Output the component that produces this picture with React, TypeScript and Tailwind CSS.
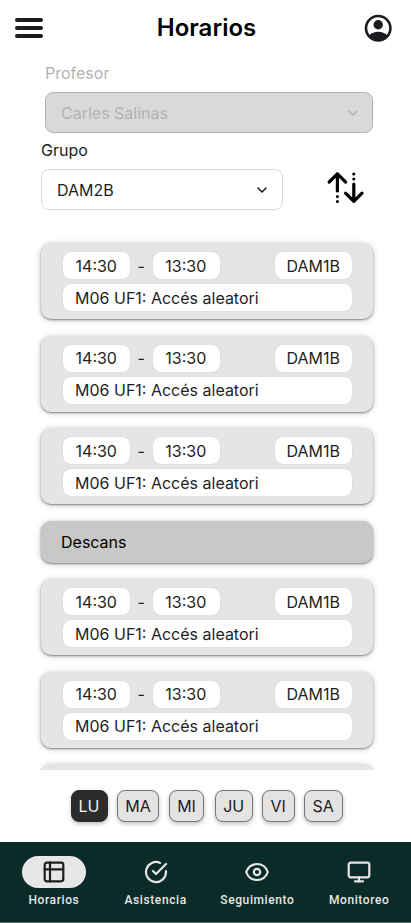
import type { ReactNode } from 'react';

const INTER = "font-['Inter',sans-serif]";
const CARD = 'shrink-0 rounded-[10px] shadow-[0_1px_2px_rgba(0,0,0,0.4),0_1px_6px_rgba(0,0,0,0.22)]';

function Chip({ children, className }: { children: ReactNode; className: string }) {
  return (
    <div className={`flex h-[27px] items-center rounded-lg bg-white text-base leading-none text-[#1e1e1e] shadow-[0_0_1px_rgba(0,0,0,0.2)] ${className}`}>
      {children}
    </div>
  );
}

function Lesson() {
  return (
    <div className={`h-[76px] bg-[#e5e5e5] pt-[9.1px] pr-[21px] pl-[22px] ${CARD}`}>
      <div className="flex items-center">
        <Chip className="w-[66.5px] justify-center">14:30</Chip>
        <span className="w-[23.5px] text-center text-base leading-none text-[#1e1e1e]">-</span>
        <Chip className="w-[67px] justify-center pr-[1.5px]">13:30</Chip>
        <Chip className="ml-auto w-[77.5px] justify-center">DAM1B</Chip>
      </div>
      <Chip className="mt-[5px] pl-3">M06 UF1: Accés aleatori</Chip>
    </div>
  );
}

function Chevron() {
  return (
    <svg width="16" height="16" viewBox="0 0 16 16" fill="none" stroke="currentColor" strokeWidth="1.6" strokeLinecap="round" strokeLinejoin="round">
      <path d="m4 6 4 4 4-4" />
    </svg>
  );
}

const days = [
  { name: 'LU', style: 'w-[37px] bg-[#2c2c2c] border-[#2c2c2c] text-[#f3f3f3]' },
  { name: 'MA', style: 'ml-[9.5px] w-[42px] bg-[#e3e3e3] border-[#767676] text-[#1e1e1e]' },
  { name: 'MI', style: 'ml-[10px] w-[35px] bg-[#e3e3e3] border-[#767676] text-[#1e1e1e]' },
  { name: 'JU', style: 'ml-[11px] w-[37.5px] bg-[#e3e3e3] border-[#767676] text-[#1e1e1e]' },
  { name: 'VI', style: 'ml-[9.5px] w-[32.5px] bg-[#e3e3e3] border-[#767676] text-[#1e1e1e]' },
  { name: 'SA', style: 'ml-[9.5px] w-[38.5px] bg-[#e3e3e3] border-[#767676] text-[#1e1e1e]' },
];

function NavItem({ label, active, children }: { label: string; active?: boolean; children: ReactNode }) {
  return (
    <div className="flex flex-1 flex-col items-center">
      <div className={`flex h-8 w-16 items-center justify-center rounded-full ${active ? 'bg-[#e6e6e6] text-[#1e1e1e]' : 'text-[#e6e6e6]'}`}>
        <svg width="24" height="24" viewBox="0 0 24 24" fill="none" stroke="currentColor" strokeWidth="2.2" strokeLinecap="round" strokeLinejoin="round">
          {children}
        </svg>
      </div>
      <span className="mt-1 font-['Roboto',sans-serif] text-xs leading-4 font-medium tracking-[0.6px] text-[#e6e6e6]">{label}</span>
    </div>
  );
}

export default function App() {
  return (
    <div className={`flex h-[923px] w-[411px] flex-col overflow-hidden bg-white ${INTER}`}>
      <header className="flex h-[55px] shrink-0 items-center pr-[17px] pl-[15px]">
        <div className="flex w-[28px] flex-col gap-1">
          <span className="h-1 rounded-full bg-[#1d1b20]" />
          <span className="h-1 rounded-full bg-[#1d1b20]" />
          <span className="h-1 rounded-full bg-[#1d1b20]" />
        </div>
        <h1 className="flex-1 pl-2 text-center text-2xl leading-none font-semibold text-black">Horarios</h1>
        <svg width="32" height="32" viewBox="0 0 32 32">
          <circle cx="16.2" cy="16.2" r="12.2" fill="none" stroke="#1d1b20" strokeWidth="2.6" />
          <circle cx="16.2" cy="12.8" r="4.7" fill="#1d1b20" />
          <path d="M6.8 23.6c5.2-5 13.6-5 18.8 0A12.2 12.2 0 0 1 6.8 23.6Z" fill="#1d1b20" />
        </svg>
      </header>

      <section className="shrink-0 pr-[38px] pl-[45px] text-[#b3b3b3]">
        <div className="mt-[7px] text-base leading-[22px]">Profesor</div>
        <div className="mt-2 flex h-[41px] items-center justify-between rounded-lg border border-[#b3b3b3] bg-[#d9d9d9] pr-[11px] pl-[15px] text-base leading-none">
          <span>Carles Salinas</span>
          <Chevron />
        </div>
      </section>

      <section className="shrink-0 pl-[41px] text-[#1e1e1e]">
        <div className="mt-[6px] text-base leading-[22px]">Grupo</div>
        <div className="mt-2 flex items-center">
          <div className="flex h-[41px] w-[242px] items-center justify-between rounded-lg border border-[#d9d9d9] pr-3 pl-[15px] text-base leading-none">
            <span>DAM2B</span>
            <Chevron />
          </div>
          <svg className="-mt-1 ml-[43px]" width="40" height="36" viewBox="0 0 40 36" fill="none" stroke="#000" strokeWidth="3.2" strokeLinecap="round" strokeLinejoin="round">
            <path d="M11.4 21V4M3.2 12l8.2-8.2 8.2 8.2M27.8 14v17M19.6 23.2l8.2 8.2 8.2-8.2" />
            <path d="M11.4 26.5v.01M11.4 31.5v.01M27.8 4v.01M27.8 9v.01" strokeWidth="3.2" />
          </svg>
        </div>
      </section>

      <main className="mt-[13px] flex h-[547px] shrink-0 flex-col gap-[16.5px] overflow-hidden pt-5 pr-[38px] pl-[41px]">
        <Lesson />
        <Lesson />
        <Lesson />
        <div className={`flex h-[42px] items-center bg-[#c8c8c8] pl-5 text-base leading-none text-black ${CARD}`}>Descans</div>
        <Lesson />
        <Lesson />
        <div className={`h-[76px] bg-[#e5e5e5] ${CARD}`} />
      </main>

      <div className="mt-5 flex shrink-0 pl-[70.5px]">
        {days.map((day) => (
          <div key={day.name} className={`flex h-8 shrink-0 items-center justify-center rounded-lg border text-base leading-none shadow-[0_2px_4px_rgba(0,0,0,0.25)] ${day.style}`}>
            {day.name}
          </div>
        ))}
      </div>

      <nav className="mt-auto flex h-[81px] shrink-0 gap-2 border-b border-[#5b7472] bg-[#0b2b29] pt-[14px] pr-[5px] pl-[7px]">
        <NavItem label="Horarios" active>
          <rect x="2.7" y="2.7" width="18.6" height="18.6" rx="2.2" />
          <path d="M2.7 9.3h18.6M8 2.7v18.6" />
        </NavItem>
        <NavItem label="Asistencia">
          <path d="M22 11.1V12a10 10 0 1 1-5.9-9.1M22 4 12 14l-3-3" />
        </NavItem>
        <NavItem label="Seguimiento">
          <path d="M1.2 12C3 7 7 4 12 4s9 3 10.8 8C21 17 17 20 12 20S3 17 1.2 12Z" />
          <circle cx="12" cy="12" r="3.2" />
        </NavItem>
        <NavItem label="Monitoreo">
          <rect x="1.7" y="2.7" width="20.6" height="14.6" rx="2" />
          <path d="M8 21.3h8M12 17.3v4" />
        </NavItem>
      </nav>
    </div>
  );
}
